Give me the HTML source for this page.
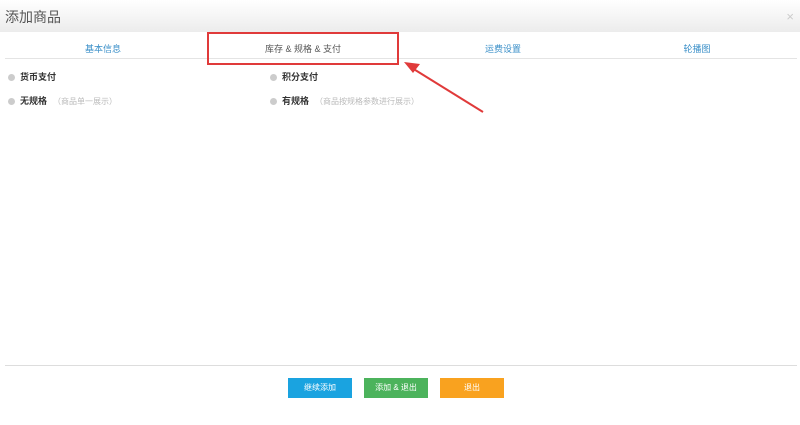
<html><head><style>
body{margin:0;width:800px;height:425px;background:#fff;font-family:"Liberation Sans","Noto Sans CJK SC",sans-serif;position:relative;overflow:hidden}
.hd{position:absolute;left:0;top:0;width:800px;height:32px;background:linear-gradient(#fff,#ececec);}
.hd span{position:absolute;left:5px;top:7px;font-size:14px;color:#555}
.x{position:absolute;right:6px;top:9px;font-size:13px;color:#ccc}
.tab{position:absolute;top:42px;font-size:9px;color:#3a8fc8;text-align:center;width:200px}
.line{position:absolute;left:5px;width:792px;height:1px;background:#e4e4e4}
.r{position:absolute;font-size:9px;font-weight:bold;color:#333}
.r i{display:inline-block;width:7px;height:7px;border-radius:50%;background:#ccc;margin-right:5px;vertical-align:-1px}
.r em{font-style:normal;font-weight:normal;color:#bbb;font-size:8px;margin-left:6px}
.b{position:absolute;top:378px;width:64px;height:20px;color:#fff;font-size:8px;text-align:center;line-height:20px}
</style></head><body>
<div class="hd"><span>添加商品</span><div class="x">×</div></div>
<div class="tab" style="left:3px">基本信息</div>
<div class="tab" style="left:203px;color:#555">库存 &amp; 规格 &amp; 支付</div>
<div class="tab" style="left:403px">运费设置</div>
<div class="tab" style="left:597px">轮播图</div>
<div class="line" style="top:58px"></div>
<div style="position:absolute;left:207px;top:32px;width:188px;height:29px;border:2px solid #e03a3a"></div>
<svg style="position:absolute;left:0;top:0" width="800" height="425"><line x1="483" y1="112" x2="412" y2="68" stroke="#e03a3a" stroke-width="2"/><polygon points="404,62 420,64 413,73" fill="#e03a3a"/></svg>
<div class="r" style="left:8px;top:70px"><i></i>货币支付</div>
<div class="r" style="left:270px;top:70px"><i></i>积分支付</div>
<div class="r" style="left:8px;top:94px"><i></i>无规格<em>（商品单一展示）</em></div>
<div class="r" style="left:270px;top:94px"><i></i>有规格<em>（商品按规格参数进行展示）</em></div>
<div class="line" style="top:365px;background:#ddd"></div>
<div class="b" style="left:288px;background:#1aa3e0">继续添加</div>
<div class="b" style="left:364px;background:#4cb35c">添加 &amp; 退出</div>
<div class="b" style="left:440px;background:#f9a21f">退出</div>
</body></html>
